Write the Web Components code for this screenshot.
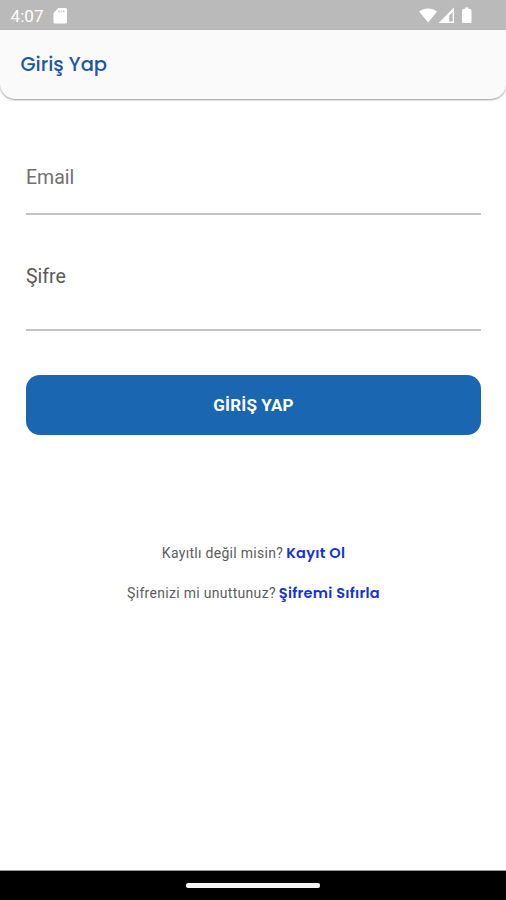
<!DOCTYPE html>
<html lang="tr">
<head>
<meta charset="utf-8">
<meta name="viewport" content="width=device-width, initial-scale=1">
<title>Giriş Yap</title>
<style>
	body {
		margin: 0;
		font-family: Roboto, "Liberation Sans", sans-serif;
	}
</style>
</head>
<body>
<login-screen></login-screen>

<script>
class StatusBar extends HTMLElement {
	constructor() {
		super();
		this.attachShadow({ mode: 'open' });
		this.shadowRoot.innerHTML = `
			<style>
				:host {
					display: flex;
					align-items: center;
					box-sizing: border-box;
					height: 30px;
					padding: 1px 32px 0 10.5px;
					background: #bababa;
					color: #fff;
					font-size: 17px;
				}
				.time {
					width: 42.5px;
					letter-spacing: 0.1px;
				}
				.icons {
					margin-left: auto;
				}
				svg {
					display: block;
					fill: #fff;
				}
			</style>
			<span class="time"><slot></slot></span>
			<svg width="15" height="18" viewBox="0 0 15 18">
				<path fill-rule="evenodd" d="M5.500 1h7a1.500 1.500 0 0 1 1.500 1.500v12.500a1.500 1.500 0 0 1-1.500 1.500h-10.500a1.500 1.500 0 0 1-1.500-1.500V6zM5.300 3.400v1.800h1.200V3.400zM7.700 3.400v1.800h1.200V3.400zM10.100 3.400v1.800h1.200V3.400z"/>
			</svg>
			<svg class="icons" width="55" height="18" viewBox="0 0 55 18">
				<path d="M0.200 4.500C5 0.400 13.500 0.400 18 4.500L9.100 15.500z"/>
				<path fill-rule="evenodd" d="M35 0.500v15.500H19.500zM33.700 5l-3.500 3.500v6h3.500z"/>
				<path d="M46 0.500h3.500v1.500h1.500a1.500 1.500 0 0 1 1.500 1.500v11.500a1 1 0 0 1-1 1h-7.500a1 1 0 0 1-1-1V3.500a1.500 1.500 0 0 1 1.500-1.500H46z"/>
			</svg>
		`;
	}
}

class AppHeader extends HTMLElement {
	constructor() {
		super();
		this.attachShadow({ mode: 'open' });
		this.shadowRoot.innerHTML = `
			<style>
				:host {
					display: flex;
					align-items: center;
					box-sizing: border-box;
					height: 69px;
					padding: 1px 20px 0 20.5px;
					border-radius: 0 0 15px 15px;
					background: #fafafa;
					box-shadow: 0 1px 2px rgba(0, 0, 0, 0.4);
				}
				h1 {
					margin: 0;
					color: #1f56a5;
					font: 500 19.5px/30px Poppins, sans-serif;
				}
			</style>
			<h1><slot></slot></h1>
		`;
	}
}

class TextField extends HTMLElement {
	constructor() {
		super();
		this.attachShadow({ mode: 'open' });
		this.shadowRoot.innerHTML = `
			<style>
				:host {
					display: block;
					box-sizing: border-box;
					border-bottom: 2px solid #c4c4c4;
					color: var(--label-color, #707070);
					font-size: 19.5px;
					line-height: 26px;
				}
			</style>
			<slot></slot>
		`;
	}
}

class PrimaryButton extends HTMLElement {
	constructor() {
		super();
		this.attachShadow({ mode: 'open' });
		this.shadowRoot.innerHTML = `
			<style>
				:host {
					display: block;
				}
				button {
					display: block;
					width: 100%;
					height: 60px;
					padding: 0;
					border: 0;
					border-radius: 14px;
					background: #1a66b0;
					color: #fff;
					font: 700 17px/20px Roboto, sans-serif;
					letter-spacing: 0.15px;
				}
			</style>
			<button type="button"><slot></slot></button>
		`;
	}
}

class LinkRow extends HTMLElement {
	constructor() {
		super();
		this.attachShadow({ mode: 'open' });
		this.shadowRoot.innerHTML = `
			<style>
				:host {
					display: flex;
					justify-content: center;
					align-items: baseline;
					gap: 3px;
					height: 20px;
					color: #5c5c5c;
					font-size: 14px;
					line-height: 20px;
					letter-spacing: 0.3px;
				}
				a {
					color: #1232dc;
					font: 600 14.5px/20px Poppins, sans-serif;
					letter-spacing: 0.25px;
				}
			</style>
			<span><slot></slot></span>
			<a><slot name="link"></slot></a>
		`;
	}
}

class NavigationBar extends HTMLElement {
	constructor() {
		super();
		this.attachShadow({ mode: 'open' });
		this.shadowRoot.innerHTML = `
			<style>
				:host {
					display: flex;
					justify-content: center;
					align-items: center;
					box-sizing: border-box;
					height: 30px;
					border-top: 1px solid #999;
					background: #000;
				}
				.handle {
					width: 134px;
					height: 5px;
					border-radius: 2px;
					background: #f4f4f4;
				}
			</style>
			<div class="handle"></div>
		`;
	}
}

class LoginScreen extends HTMLElement {
	constructor() {
		super();
		this.attachShadow({ mode: 'open' });
		this.shadowRoot.innerHTML = `
			<style>
				:host {
					display: flex;
					flex-direction: column;
					height: 900px;
					background: #fff;
				}
				main {
					flex: 1;
					padding: 66px 25px 0 26px;
				}
				.email {
					height: 50px;
				}
				.password {
					--label-color: #5a5a5a;
					height: 67px;
					margin: 49px 0 43.5px;
				}
				.links {
					display: grid;
					gap: 20px;
					margin-top: 108px;
				}
			</style>
			<status-bar>4:07</status-bar>
			<app-header>Giriş Yap</app-header>
			<main>
				<text-field class="email">Email</text-field>
				<text-field class="password">Şifre</text-field>
				<primary-button>GİRİŞ YAP</primary-button>
				<div class="links">
					<link-row>Kayıtlı değil misin?<span slot="link">Kayıt Ol</span></link-row>
					<link-row>Şifrenizi mi unuttunuz?<span slot="link">Şifremi Sıfırla</span></link-row>
				</div>
			</main>
			<navigation-bar></navigation-bar>
		`;
	}
}

customElements.define('status-bar', StatusBar);
customElements.define('app-header', AppHeader);
customElements.define('text-field', TextField);
customElements.define('primary-button', PrimaryButton);
customElements.define('link-row', LinkRow);
customElements.define('navigation-bar', NavigationBar);
customElements.define('login-screen', LoginScreen);
</script>
</body>
</html>
